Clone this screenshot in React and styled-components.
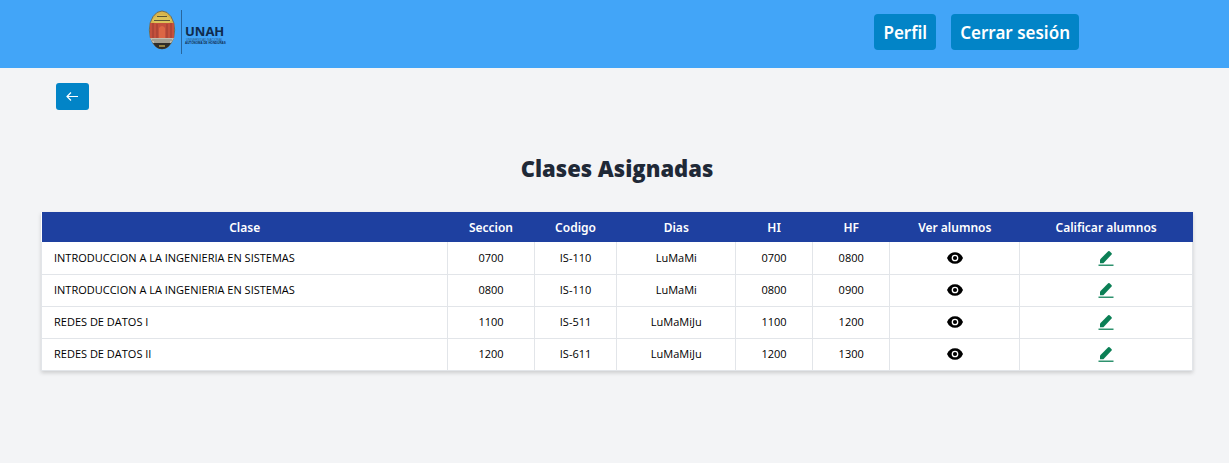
import React from "react";
import styled, { createGlobalStyle } from "styled-components";

const GlobalStyle = createGlobalStyle`
  *, *::before, *::after { box-sizing: border-box; }
  body {
    margin: 0;
    background: #f3f4f6;
    color: #000;
    font-family: "Segoe UI", "Open Sans", "Noto Sans", sans-serif;
    font-size: 11px;
    line-height: 16px;
  }
`;

const Header = styled.header`
  display: flex;
  align-items: center;
  justify-content: space-between;
  height: 68px;
  padding: 0 150px 4px 148px;
  background: #42a5f8;
`;

const HomeLink = styled.a`
  display: block;
  height: 48px;
`;

const Nav = styled.nav`
  display: flex;
  gap: 15px;
`;

const NavButton = styled.button`
  height: 36px;
  padding: 2px 9px 0;
  border: 0;
  border-radius: 4px;
  background: #0284c7;
  color: #fff;
  font: 600 17px/24px "Segoe UI", "Noto Sans", sans-serif;
  cursor: pointer;
`;

const BackButton = styled.button`
  display: grid;
  place-items: center;
  width: 33px;
  height: 27px;
  margin: 15px 0 0 56px;
  padding: 0;
  border: 0;
  border-radius: 3px;
  background: #0284c7;
  color: #fff;
  cursor: pointer;
`;

const Main = styled.main`
  padding: 42px 36px 24px 41px;
`;

const Title = styled.h1`
  margin: 0 0 28px;
  color: #1f2937;
  text-align: center;
  font-size: 22px;
  font-weight: 800;
  line-height: 32px;
`;

const Table = styled.table`
  width: 100%;
  table-layout: fixed;
  border-collapse: collapse;
  background: #fff;
  box-shadow: 0 2px 4px rgba(0, 0, 0, 0.16);
`;

const Col = styled.col`
  width: ${(p) => p.$share}%;
`;

const HeadCell = styled.th`
  height: 30px;
  padding: 2px 0 0;
  background: #1e40a0;
  color: #fff;
  font-family: "Segoe UI", "Noto Sans", sans-serif;
  font-size: 12px;
  font-weight: 600;
`;

const Cell = styled.td`
  height: 32px;
  padding: 0 ${(p) => (p.$left ? 12 : 0)}px;
  border: 1px solid #e2e5e9;
  border-top: 0;
  text-align: ${(p) => (p.$left ? "left" : "center")};
`;

const IconButton = styled.button`
  display: block;
  width: 18px;
  height: 18px;
  margin: 0 auto;
  padding: 0;
  border: 0;
  background: none;
  color: ${(p) => p.$color};
  cursor: pointer;

  svg { display: block; }
`;

const Logo = () => (
  <svg width="82" height="48" viewBox="0 0 82 48" role="img" aria-label="UNAH">
    <ellipse cx="14" cy="22" rx="12.7" ry="19" fill="#d9b44a" stroke="#5b5a50" strokeWidth=".8" />
    <path d="M4 12Q14 2 24 12L21 15H7Z" fill="#dcc35a" />
    <path d="M6 12.5h16M9 8.5h10" stroke="#5c5436" strokeWidth="1" />
    <path d="M2 15h24v15H2z" fill="#c4503c" />
    <path d="M5 15v15M9 16v14M19 16v14M23 15v15" stroke="#9c3c30" strokeWidth="1" />
    <path d="M11 30V20q3-4 6 0v10z" fill="#dc6644" />
    <path d="M2 30h24l-3 5H5z" fill="#c2bdb0" />
    <path d="M4 32h20M6 34h16" stroke="#68645a" strokeWidth=".7" />
    <path d="M5 35h18q-3 6-9 6t-9-6z" fill="#302d2a" />
    <path d="M11 38h6" stroke="#d9bd55" strokeWidth="1.2" />
    <path d="M33.5 2v44" stroke="#28669d" />
    <text x="37" y="28" fill="#102b4c" fontFamily="Open Sans, sans-serif" fontSize="13" fontWeight="700">UNAH</text>
    <text x="38" y="33" fill="#24537f" fontFamily="Liberation Sans, sans-serif" fontSize="3">UNIVERSIDAD NACIONAL</text>
    <text x="37" y="36" fill="#102b4c" fontFamily="Liberation Sans, sans-serif" fontSize="3" fontWeight="700">AUTÓNOMA DE HONDURAS</text>
  </svg>
);

const ArrowIcon = () => (
  <svg width="13" height="11" viewBox="0 0 13 11" fill="none" stroke="currentColor" strokeWidth="1.2" aria-hidden="true">
    <path d="M12 5.5H1M5 1.5l-4 4 4 4" />
  </svg>
);

const EyeIcon = () => (
  <svg width="18" height="18" viewBox="0 0 18 18" aria-hidden="true">
    <path d="M1 9Q3.500 3.200 9 3.200T17 9Q14.500 14.800 9 14.800T1 9z" fill="currentColor" />
    <circle cx="9" cy="9" r="2.700" fill="none" stroke="#fff" strokeWidth="1.300" />
  </svg>
);

const PenIcon = () => (
  <svg width="18" height="18" viewBox="0 0 18 18" fill="currentColor" aria-hidden="true">
    <path d="M3 14.200V10.400L11.200 2.200q.7-.6 1.400 0l2 2q.6.700 0 1.400L6.400 14.200z" />
    <path d="M1.500 15.500h15V17h-15z" opacity=".85" />
  </svg>
);

const columns = [
  ["Clase", 35.3], ["Seccion", 7.5], ["Codigo", 7.2], ["Dias", 10.3],
  ["HI", 6.7], ["HF", 6.7], ["Ver alumnos", 11.3], ["Calificar alumnos", 15],
];

const classes = [
  ["INTRODUCCION A LA INGENIERIA EN SISTEMAS", "0700", "IS-110", "LuMaMi", "0700", "0800"],
  ["INTRODUCCION A LA INGENIERIA EN SISTEMAS", "0800", "IS-110", "LuMaMi", "0800", "0900"],
  ["REDES DE DATOS I", "1100", "IS-511", "LuMaMiJu", "1100", "1200"],
  ["REDES DE DATOS II", "1200", "IS-611", "LuMaMiJu", "1200", "1300"],
];

export default function App() {
  return (
    <>
      <GlobalStyle />
      <Header>
        <HomeLink href="#" aria-label="UNAH"><Logo /></HomeLink>
        <Nav>
          <NavButton type="button">Perfil</NavButton>
          <NavButton type="button">Cerrar sesión</NavButton>
        </Nav>
      </Header>
      <BackButton type="button" aria-label="Regresar"><ArrowIcon /></BackButton>
      <Main>
        <Title>Clases Asignadas</Title>
        <Table>
          <colgroup>
            {columns.map(([name, share]) => <Col key={name} $share={share} />)}
          </colgroup>
          <thead>
            <tr>{columns.map(([name]) => <HeadCell key={name} scope="col">{name}</HeadCell>)}</tr>
          </thead>
          <tbody>
            {classes.map((row) => (
              <tr key={row[1]}>
                {row.map((value, i) => <Cell key={i} $left={i === 0}>{value}</Cell>)}
                <Cell>
                  <IconButton type="button" $color="#000" aria-label="Ver alumnos"><EyeIcon /></IconButton>
                </Cell>
                <Cell>
                  <IconButton type="button" $color="#0b7f55" aria-label="Calificar alumnos"><PenIcon /></IconButton>
                </Cell>
              </tr>
            ))}
          </tbody>
        </Table>
      </Main>
    </>
  );
}
